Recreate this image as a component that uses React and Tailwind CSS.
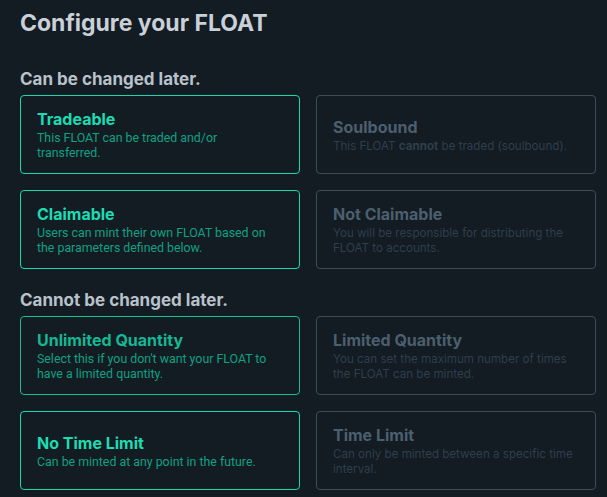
import React, { useState } from 'react';

const groups = [
  {
    heading: 'Can be changed later.',
    rows: [
      {
        on: { title: 'Tradeable', desc: 'This FLOAT can be traded and/or transferred.' },
        off: { title: 'Soulbound', desc: <>This FLOAT <b className="font-bold">cannot</b> be traded (soulbound).</> },
      },
      {
        on: { title: 'Claimable', desc: 'Users can mint their own FLOAT based on the parameters defined below.' },
        off: { title: 'Not Claimable', desc: 'You will be responsible for distributing the FLOAT to accounts.' },
      },
    ],
  },
  {
    heading: 'Cannot be changed later.',
    rows: [
      {
        on: { title: 'Unlimited Quantity', desc: "Select this if you don't want your FLOAT to have a limited quantity.", dim: true },
        off: { title: 'Limited Quantity', desc: 'You can set the maximum number of times the FLOAT can be minted.' },
      },
      {
        on: { title: 'No Time Limit', desc: 'Can be minted at any point in the future.' },
        off: { title: 'Time Limit', desc: 'Can only be minted between a specific time interval.' },
      },
    ],
  },
];

const Option = ({ item, active, onClick }) => (
  <button
    onClick={onClick}
    className={`h-[79px] rounded-[4px] border px-4 text-left flex flex-col justify-center ${
      active ? (item.dim ? 'border-[#15bf98]' : 'border-[#1ad9b0]') : 'border-[#3b4d5a]'
    }`}
  >
    <h3
      className={`text-[16px] leading-[22px] font-bold font-['Inter',sans-serif] ${
        active ? (item.dim ? 'text-[#14b893]' : 'text-[#1bdcb2]') : 'text-[#4c5f6e]'
      }`}
    >
      {item.title}
    </h3>
    <p
      className={`mt-px leading-[15px] ${
        active
          ? "text-[12.35px] text-[#11a182] font-['Roboto',sans-serif]"
          : "text-[11.6px] text-[#2e3f4c] font-['Inter',sans-serif]"
      }`}
    >
      {item.desc}
    </p>
  </button>
);

export default function App() {
  const [picked, setPicked] = useState({ '0-0': 'on', '0-1': 'on', '1-0': 'on', '1-1': 'on' });

  return (
    <div className="min-h-[497px] bg-[#131b23] px-5 pt-[7px] font-['Inter',sans-serif]">
      <h1 className="text-[23px] leading-[32px] font-bold text-[#c9d0d8]">Configure your FLOAT</h1>
      {groups.map((g, gi) => (
        <section key={g.heading} className={gi === 0 ? 'mt-[29px]' : 'mt-[20px]'}>
          <h2 className="text-[17px] leading-[22px] font-bold text-[#b9c2cb] mb-[5px]">{g.heading}</h2>
          <div className="flex flex-col gap-[16px]">
            {g.rows.map((r, ri) => {
              const key = `${gi}-${ri}`;
              return (
                <div key={key} className="grid grid-cols-2 gap-[16px] w-[576px]">
                  <Option item={r.on} active={picked[key] === 'on'} onClick={() => setPicked({ ...picked, [key]: 'on' })} />
                  <Option item={r.off} active={picked[key] === 'off'} onClick={() => setPicked({ ...picked, [key]: 'off' })} />
                </div>
              );
            })}
          </div>
        </section>
      ))}
    </div>
  );
}
